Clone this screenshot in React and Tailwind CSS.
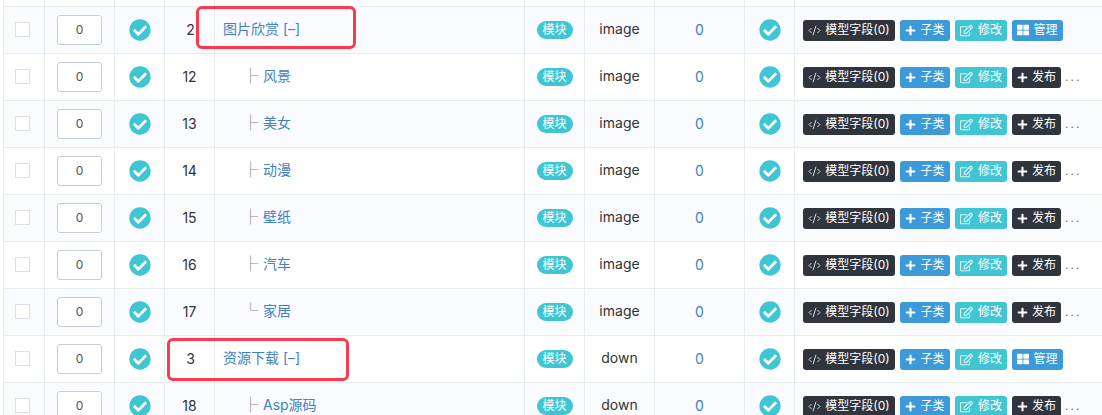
import { FaCheckCircle, FaPlus, FaRegEdit, FaThLarge } from "react-icons/fa";
import { CodeXml } from "lucide-react";

const rows = [
  { id: 2, name: "图片欣赏 [–]", model: "image", top: true },
  { id: 12, name: "风景", model: "image", prefix: "├" },
  { id: 13, name: "美女", model: "image", prefix: "├" },
  { id: 14, name: "动漫", model: "image", prefix: "├" },
  { id: 15, name: "壁纸", model: "image", prefix: "├" },
  { id: 16, name: "汽车", model: "image", prefix: "├" },
  { id: 17, name: "家居", model: "image", prefix: "└" },
  { id: 3, name: "资源下载 [–]", model: "down", top: true },
  { id: 18, name: "Asp源码", model: "down", prefix: "├" },
];

const btn = "flex h-[21px] items-center justify-center rounded-[3px] text-xs text-white";

function Row({ row, index }) {
  const cell = "flex shrink-0 items-center justify-center border-r border-[#e7ecf1]";
  return (
    <div className={`flex h-[47px] shrink-0 border-b border-[#e7ecf1] text-sm text-[#333] ${index % 2 === 0 ? "bg-[#fafbfe]" : "bg-white"}`}>
      <div className={`${cell} w-[41px] pr-[3px] pb-[1px]`}>
        <span className="h-[15px] w-[15px] border border-[#dcdfe6] bg-white" />
      </div>
      <div className={`${cell} w-[70px]`}>
        <span className="flex h-[30px] w-[45px] items-center justify-center rounded-[3px] border border-[#c5cddb] bg-white text-xs text-[#555]">0</span>
      </div>
      <div className={`${cell} w-[50px]`}>
        <FaCheckCircle className="text-[22px] text-[#40c6d3]" />
      </div>
      <div className={`${cell} w-[50px] pb-[1px]`}>
        <span className={row.id < 10 ? "pl-[2px]" : ""}>{row.id}</span>
      </div>
      <div className={`${cell} w-[310px] justify-start pb-[3px] pl-[8px] text-[#4281bd]`}>
        {row.prefix && <span className="ml-[20px] w-[20px] text-[15px] text-[#888]">{row.prefix}</span>}
        <span>{row.name}</span>
      </div>
      <div className={`${cell} w-[60px]`}>
        <span className="flex h-[18px] w-[36px] items-center justify-center rounded-full bg-[#40c6d3] text-xs text-white">模块</span>
      </div>
      <div className={`${cell} w-[70px] pb-[3px]`}>{row.model}</div>
      <div className={`${cell} w-[90px] pb-[1px] text-[#3f7fbd]`}>0</div>
      <div className={`${cell} w-[50px]`}>
        <FaCheckCircle className="text-[22px] text-[#40c6d3]" />
      </div>
      <div className="flex flex-1 items-center pl-[8px]">
        <span className={`${btn} w-[92px] gap-[4px] bg-[#30353d]`}>
          <CodeXml size={13} strokeWidth={1.5} />
          模型字段(0)
        </span>
        <span className={`${btn} ml-[5px] w-[50px] gap-[4px] bg-[#3c9ad9]`}>
          <FaPlus className="text-[11px]" />
          子类
        </span>
        <span className={`${btn} ml-[5px] w-[52px] gap-[5px] bg-[#40c6d3]`}>
          <FaRegEdit className="text-[13px] opacity-80" />
          修改
        </span>
        {row.top ? (
          <span className={`${btn} ml-[5px] w-[51px] gap-[4px] bg-[#3c9ad9]`}>
            <FaThLarge className="text-[12px]" />
            管理
          </span>
        ) : (
          <>
            <span className={`${btn} ml-[5px] w-[49px] gap-[4px] bg-[#30353d]`}>
              <FaPlus className="text-[11px]" />
              发布
            </span>
            <span className="ml-[4px] pb-[1px] text-xs tracking-[2px] text-[#777]">...</span>
          </>
        )}
      </div>
    </div>
  );
}

export default function App() {
  return (
    <div className="relative h-[415px] w-[1102px] overflow-hidden bg-white pl-[3px]" style={{ fontFamily: 'Inter, "Noto Sans CJK SC", sans-serif' }}>
      <div className="flex flex-col border-l border-[#e7ecf1]">
        <div className="flex h-[7px] shrink-0 border-b border-[#e7ecf1]">
          {[41, 70, 50, 50, 310, 60, 70, 90, 50].map((w, i) => (
            <div key={i} className="shrink-0 border-r border-[#e7ecf1]" style={{ width: w }} />
          ))}
        </div>
        {rows.map((row, i) => (
          <Row key={row.id} row={row} index={i} />
        ))}
      </div>
      <div className="absolute left-[196px] top-[6px] h-[43px] w-[160px] rounded-[6px] border-[3px] border-[#fb3a4c]" />
      <div className="absolute left-[167px] top-[338px] h-[43px] w-[182px] rounded-[6px] border-[3px] border-[#fb3a4c]" />
    </div>
  );
}
